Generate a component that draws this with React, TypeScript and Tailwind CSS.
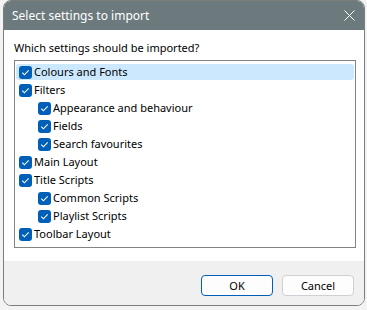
const rows: { label: string; level: number; selected?: boolean }[] = [
  { label: "Colours and Fonts", level: 0, selected: true },
  { label: "Filters", level: 0 },
  { label: "Appearance and behaviour", level: 1 },
  { label: "Fields", level: 1 },
  { label: "Search favourites", level: 1 },
  { label: "Main Layout", level: 0 },
  { label: "Title Scripts", level: 0 },
  { label: "Common Scripts", level: 1 },
  { label: "Playlist Scripts", level: 1 },
  { label: "Toolbar Layout", level: 0 },
];

function Check() {
  return (
    <svg width="13" height="13" viewBox="0 0 13 13" className="shrink-0">
      <rect x="0" y="0" width="13" height="13" rx="3" fill="#005fb8" />
      <path d="M3.3 6.7 L5.4 8.8 L9.7 4.4" fill="none" stroke="#fff" strokeWidth="1.1" />
    </svg>
  );
}

export default function App() {
  return (
    <div
      className="w-[367px] h-[310px] bg-[#f3f3f3] pl-[3px] pr-[2px] pb-[4px]"
      style={{ fontFamily: '"Noto Sans", "Segoe UI", sans-serif' }}
    >
      <div className="h-[306px] rounded-[8px] border border-[#7d7d7d] overflow-hidden flex flex-col bg-white">
        <div className="h-[29px] bg-[#6c7a7d] flex items-center justify-between pl-[8px] pr-[9px] shrink-0">
          <span className="text-white text-[12px]">Select settings to import</span>
          <svg width="11" height="11" viewBox="0 0 11 11">
            <path d="M0.5 0.5 L10.5 10.5 M10.5 0.5 L0.5 10.5" stroke="#fff" strokeWidth="1" />
          </svg>
        </div>
        <div className="flex-1 pl-[10px] pr-[8px] pt-[10px]">
          <div className="text-[11px] leading-[16px] text-black">Which settings should be imported?</div>
          <div className="mt-[4px] h-[188px] border border-[#838383] pt-[2px]">
            {rows.map((r) => (
              <div key={r.label} className="h-[18px] py-[1px] px-[1px]">
                <div
                  className={
                    "h-[16px] flex items-center gap-[2px] rounded-[3px] " +
                    (r.level === 1 ? "pl-[22px] " : "pl-[3px] ") +
                    (r.selected ? "bg-[#cce8ff]" : "")
                  }
                >
                  <Check />
                  <span className="text-[11px] text-black leading-[16px]">{r.label}</span>
                </div>
              </div>
            ))}
          </div>
        </div>
        <div className="h-[44px] bg-[#f0f0f0] flex justify-end items-start gap-[9px] pr-[10px] pt-[14px] shrink-0">
          <button className="w-[72px] h-[21px] rounded-[4px] border border-[#005fb8] bg-[#fdfdfd] text-[11px] text-black leading-none">
            OK
          </button>
          <button className="w-[72px] h-[21px] rounded-[4px] border border-[#d0d0d0] bg-[#fdfdfd] text-[11px] text-black leading-none">
            Cancel
          </button>
        </div>
      </div>
    </div>
  );
}
